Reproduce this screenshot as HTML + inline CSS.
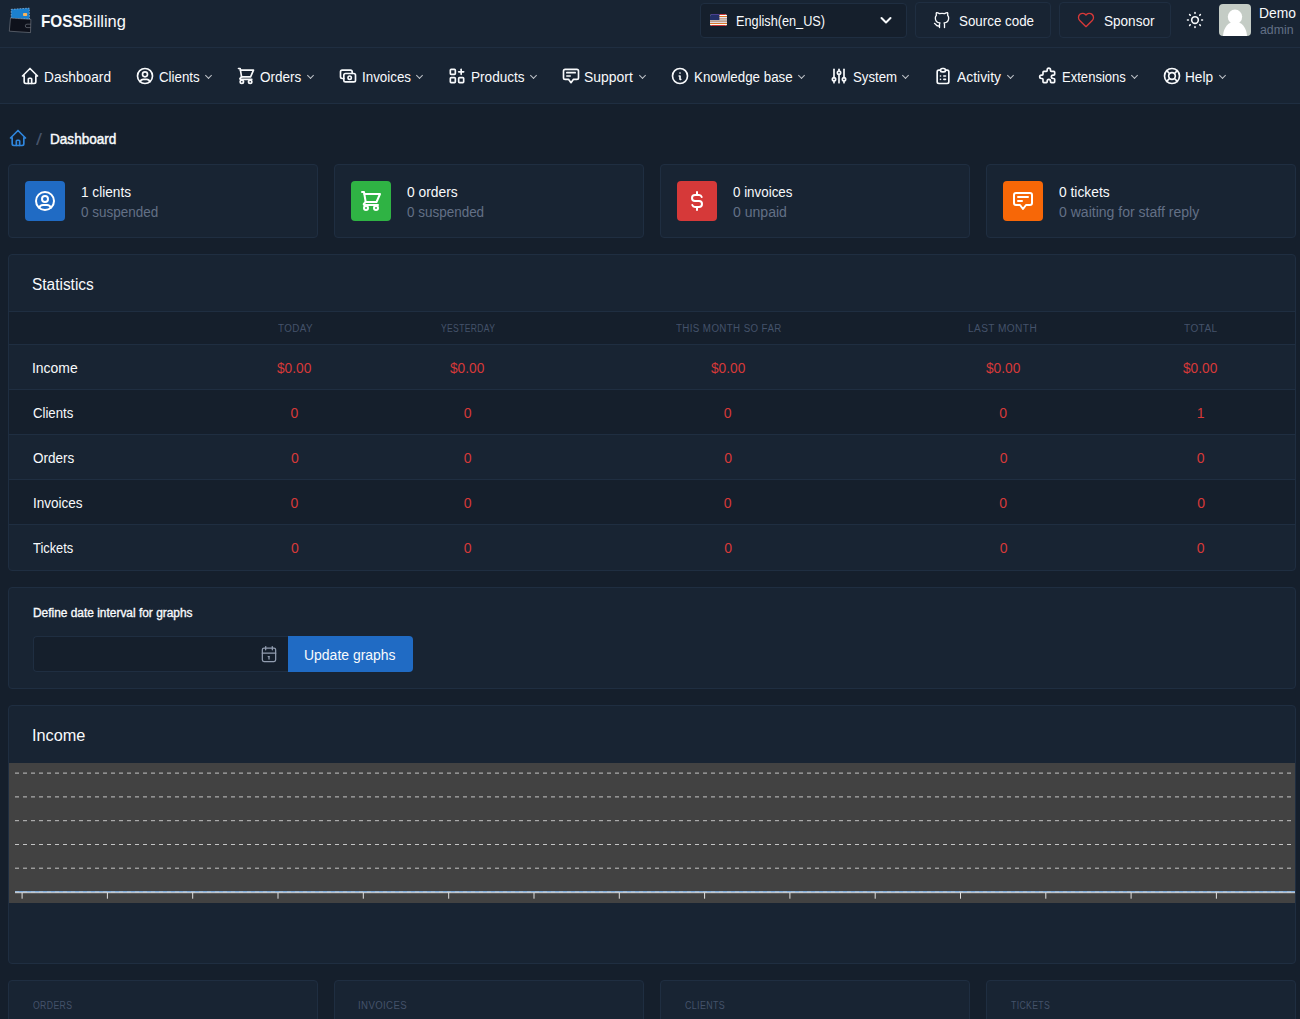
<!DOCTYPE html>
<html lang="en">
<head>
<meta charset="utf-8">
<title>Dashboard - FOSSBilling</title>
<style>
*{box-sizing:border-box;margin:0;padding:0}
html,body{width:1300px;height:1019px;overflow:hidden;background:#151f2c}
body{position:relative;font-family:"Liberation Sans",Arial,sans-serif;font-size:14px;color:#f8fafc;line-height:20px}
.abs{position:absolute}
svg.ic{position:absolute;width:20px;height:20px;fill:none;stroke:currentColor;stroke-width:2;stroke-linecap:round;stroke-linejoin:round}
.t{position:absolute;white-space:nowrap;line-height:20px;transform-origin:0 50%}
#hdr{position:absolute;left:0;top:0;width:1300px;height:48px;background:#182433;border-bottom:1px solid #1f2e41}
#nav{position:absolute;left:0;top:48px;width:1300px;height:56px;background:#182433;border-bottom:1px solid #1f2e41}
.btn{position:absolute;top:2px;height:36px;border:1px solid #1f2e41;border-radius:4px;background:#182433}
.muted{color:#637086}
.card{position:absolute;background:#182433;border:1px solid #1f2e41;border-radius:4px}
.av{position:absolute;left:16px;top:16px;width:40px;height:40px;border-radius:4px;color:#fff}
.av svg.ic{left:8px;top:8px;width:24px;height:24px;stroke-width:2}
.chev{position:absolute;width:5px;height:5px;border-right:1.5px solid #f8fafc;border-bottom:1.5px solid #f8fafc;transform:rotate(45deg);opacity:.75}
.up{font-size:10px;letter-spacing:.4px;color:#44526a;text-transform:uppercase}
.row{position:absolute;left:0;width:1286px;height:45px;border-top:1px solid #1f2e41}
.row.d{background:#151f2c}
.red{color:#d63939}
</style>
</head>
<body>

<div id="hdr">
  <svg class="abs" style="left:8px;top:7px" width="25" height="27" viewBox="0 0 25 27">
    <path d="M3.2 2.3 L21.3 1.1 L21.5 12.2 L3.2 11.4 Z" fill="#1b80ce" stroke="#a9c6e8" stroke-width=".6" stroke-dasharray="1.6 1.2"/>
    <rect x="15" y="6" width="4.200" height="3" rx=".9" fill="#f8b45e"/>
    <path d="M2.5 11 L22.900 12.4 L22.500 25.600 L1.300 24.200 Z" fill="#0e111b" stroke="#868c94" stroke-width=".55" stroke-linejoin="round"/>
    <path d="M22.700 17.200 h-3.700 a1.700 1.700 0 0 0 0 3.400 h3.600" fill="none" stroke="#868c94" stroke-width=".55"/>
  </svg>
  <div class="t" id="brandF" style="left:41.20px;top:12px;transform:scaleX(0.9000);font-size:17px;font-weight:bold">FOSS</div>
  <div class="t" id="brandB" style="left:81.80px;top:12px;transform:scaleX(0.9680);font-size:17px">Billing</div>
  <div class="abs" style="left:700px;top:3px;width:207px;height:35px;border:1px solid #1f2e41;border-radius:4px;background:#151f2c"></div>
  <svg class="abs" style="left:710px;top:14px;border-radius:2.5px;overflow:hidden" width="17.2" height="12" viewBox="0 0 17.2 12">
    <g><rect width="17.200" height="12" fill="#fff"/><rect x="9" y="0" width="8.200" height="1.050" fill="#cf3a3a"/><rect x="9" y="1" width="8.200" height="1.050" fill="#ffffff"/><rect x="9" y="2" width="8.200" height="1.050" fill="#e07a22"/><rect x="9" y="3" width="8.200" height="1.050" fill="#e8e2ee"/><rect x="9" y="4" width="8.200" height="1.050" fill="#c4a494"/><rect x="9" y="5" width="8.200" height="1.050" fill="#c9bdb9"/><rect x="0" y="6" width="17.200" height="1.050" fill="#c2b2aa"/><rect x="0" y="7" width="17.200" height="1.050" fill="#c29e8a"/><rect x="0" y="8" width="17.200" height="1.050" fill="#dfd9e2"/><rect x="0" y="9" width="17.200" height="1.050" fill="#da7a2a"/><rect x="0" y="10" width="17.200" height="1.050" fill="#fffff2"/><rect x="0" y="11" width="17.200" height="1.050" fill="#c93438"/><rect width="9.400" height="6" fill="#232f66"/><rect width="9.400" height="1" fill="#4b3f8f"/></g>
  </svg>
  <div class="t" id="langt" style="left:736.00px;top:11px;transform:scaleX(0.9083);">English(en_US)</div>
  <svg class="abs" style="left:878px;top:12px;fill:none;stroke:#f8fafc;stroke-width:2;stroke-linecap:round;stroke-linejoin:round" width="16" height="16" viewBox="0 0 16 16"><path d="M3.5 6l4.500 4.500l4.500 -4.500"/></svg>
  <div class="btn" style="left:915px;width:136px"></div>
  <svg class="ic" style="left:932px;top:10px;stroke-width:1.6" viewBox="0 0 24 24"><path d="M9 19c-4.300 1.400 -4.300 -2.500 -6 -3m12 5v-3.500c0 -1 .100 -1.400 -.500 -2c2.800 -.300 5.500 -1.400 5.500 -6a4.600 4.600 0 0 0 -1.300 -3.200a4.200 4.200 0 0 0 -.100 -3.200s-1.100 -.300 -3.500 1.300a12.300 12.300 0 0 0 -6.200 0c-2.400 -1.600 -3.500 -1.300 -3.500 -1.300a4.200 4.200 0 0 0 -.100 3.200a4.600 4.600 0 0 0 -1.300 3.200c0 4.600 2.700 5.700 5.500 6c-.600 .600 -.600 1.200 -.500 2v3.500"/></svg>
  <div class="t" id="srct" style="left:959.00px;top:11px;transform:scaleX(0.9540);">Source code</div>
  <div class="btn" style="left:1059px;width:112px"></div>
  <svg class="ic" style="left:1076px;top:10px;stroke:#d63939;stroke-width:1.6" viewBox="0 0 24 24"><path d="M19.500 12.572l-7.500 7.428l-7.500 -7.428a5 5 0 1 1 7.500 -6.566a5 5 0 1 1 7.500 6.572"/></svg>
  <div class="t" id="spot" style="left:1104.00px;top:11px;transform:scaleX(0.9676);">Sponsor</div>
  <svg class="ic" style="left:1185px;top:10px;stroke-width:1.9" viewBox="0 0 24 24"><path d="M12 12m-4 0a4 4 0 1 0 8 0a4 4 0 1 0 -8 0"/><path d="M3 12h1m8 -9v1m8 8h1m-9 8v1m-6.400 -15.400l.7 .7m12.100 -.7l-.7 .7m0 11.400l.7 .7m-12.100 -.7l-.7 .7"/></svg>
  <svg class="abs" style="left:1219px;top:4px;border-radius:4px" width="32" height="32" viewBox="0 0 32 32">
    <rect width="32" height="32" fill="#c4ccc5"/>
    <circle cx="16" cy="12.8" r="7.2" fill="#fff"/>
    <path d="M4 32 C4.5 24 9 17.500 16 17.500 C23 17.500 27.500 24 28 32 Z" fill="#fff"/>
  </svg>
  <div class="t" id="demot" style="left:1259.00px;top:3px;transform:scaleX(0.9883);">Demo</div>
  <div class="t muted" id="admt" style="left:1260.00px;top:20px;transform:scaleX(1.0248);font-size:12px">admin</div>
</div>
<div id="nav">
  <svg class="ic" style="left:20px;top:18px;" viewBox="0 0 24 24"><path d="M5 12l-2 0l9 -9l9 9l-2 0"/><path d="M5 12v7a2 2 0 0 0 2 2h10a2 2 0 0 0 2 -2v-7"/><path d="M10 21v-5.300a1 1 0 0 1 1 -1h2a1 1 0 0 1 1 1v5.300"/></svg>
  <div class="t" id="n0" style="left:44.00px;top:19px;transform:scaleX(0.9789);">Dashboard</div>
  <svg class="ic" style="left:135px;top:18px;" viewBox="0 0 24 24"><path d="M12 12m-9 0a9 9 0 1 0 18 0a9 9 0 1 0 -18 0"/><path d="M12 10m-3 0a3 3 0 1 0 6 0a3 3 0 1 0 -6 0"/><path d="M6.168 18.849a4 4 0 0 1 3.832 -2.849h4a4 4 0 0 1 3.834 2.855"/></svg>
  <div class="t" id="n1" style="left:159.00px;top:19px;transform:scaleX(0.9514);">Clients</div>
  <div class="chev" style="left:205.5px;top:25px"></div>
  <svg class="ic" style="left:236px;top:18px;" viewBox="0 0 24 24"><path d="M7 19m-2 0a2 2 0 1 0 4 0a2 2 0 1 0 -4 0"/><path d="M17 19m-2 0a2 2 0 1 0 4 0a2 2 0 1 0 -4 0"/><path d="M3 3h2l1.700 10"/><path d="M5.400 5h15.600l-3.500 8h-10.800"/><path d="M6.700 13l-1.800 1.700a.8 .8 0 0 0 .6 1.300h13.500"/></svg>
  <div class="t" id="n2" style="left:260.00px;top:19px;transform:scaleX(0.9665);">Orders</div>
  <div class="chev" style="left:307.5px;top:25px"></div>
  <svg class="ic" style="left:338px;top:18px;" viewBox="0 0 24 24"><path d="M7 9m0 2a2 2 0 0 1 2 -2h10a2 2 0 0 1 2 2v6a2 2 0 0 1 -2 2h-10a2 2 0 0 1 -2 -2z"/><path d="M14 14m-2 0a2 2 0 1 0 4 0a2 2 0 1 0 -4 0"/><path d="M17 9v-2a2 2 0 0 0 -2 -2h-10a2 2 0 0 0 -2 2v6a2 2 0 0 0 2 2h2"/></svg>
  <div class="t" id="n3" style="left:362.00px;top:19px;transform:scaleX(0.9550);">Invoices</div>
  <div class="chev" style="left:416.9px;top:25px"></div>
  <svg class="ic" style="left:447px;top:18px;" viewBox="0 0 24 24"><path d="M4 4m0 1a1 1 0 0 1 1 -1h4a1 1 0 0 1 1 1v4a1 1 0 0 1 -1 1h-4a1 1 0 0 1 -1 -1z"/><path d="M4 14m0 1a1 1 0 0 1 1 -1h4a1 1 0 0 1 1 1v4a1 1 0 0 1 -1 1h-4a1 1 0 0 1 -1 -1z"/><path d="M14 14m0 1a1 1 0 0 1 1 -1h4a1 1 0 0 1 1 1v4a1 1 0 0 1 -1 1h-4a1 1 0 0 1 -1 -1z"/><path d="M14 7l6 0"/><path d="M17 4l0 6"/></svg>
  <div class="t" id="n4" style="left:471.00px;top:19px;transform:scaleX(0.9707);">Products</div>
  <div class="chev" style="left:530.5px;top:25px"></div>
  <svg class="ic" style="left:561px;top:18px;" viewBox="0 0 24 24"><path d="M7 8h10"/><path d="M7 12h4"/><path d="M9 16h-4a2 2 0 0 1 -2 -2v-8a2 2 0 0 1 2 -2h14a2 2 0 0 1 2 2v8a2 2 0 0 1 -2 2h-4l-3 4z"/></svg>
  <div class="t" id="n5" style="left:584.30px;top:19px;transform:scaleX(0.9943);">Support</div>
  <div class="chev" style="left:640.0px;top:25px"></div>
  <svg class="ic" style="left:670px;top:18px;" viewBox="0 0 24 24"><path d="M3 12a9 9 0 1 0 18 0a9 9 0 0 0 -18 0"/><path d="M12 8.500h.01"/><path d="M11 12h1v4h1"/></svg>
  <div class="t" id="n6" style="left:694.00px;top:19px;transform:scaleX(0.9532);">Knowledge base</div>
  <div class="chev" style="left:798.5px;top:25px"></div>
  <svg class="ic" style="left:829px;top:18px;" viewBox="0 0 24 24"><path d="M4 16a2 2 0 1 0 4 0a2 2 0 0 0 -4 0"/><path d="M6 4v10"/><path d="M6 18v2"/><path d="M10 8a2 2 0 1 0 4 0a2 2 0 0 0 -4 0"/><path d="M12 4v2"/><path d="M12 10v10"/><path d="M16 16a2 2 0 1 0 4 0a2 2 0 0 0 -4 0"/><path d="M18 4v10"/><path d="M18 18v2"/></svg>
  <div class="t" id="n7" style="left:853.00px;top:19px;transform:scaleX(0.9447);">System</div>
  <div class="chev" style="left:902.5px;top:25px"></div>
  <svg class="ic" style="left:933px;top:18px;" viewBox="0 0 24 24"><path d="M9 5h-2a2 2 0 0 0 -2 2v12a2 2 0 0 0 2 2h10a2 2 0 0 0 2 -2v-12a2 2 0 0 0 -2 -2h-2"/><path d="M9 3m0 2a2 2 0 0 1 2 -2h2a2 2 0 0 1 2 2v0a2 2 0 0 1 -2 2h-2a2 2 0 0 1 -2 -2z"/><path d="M9 12l.01 0"/><path d="M13 12l2 0"/><path d="M9 16l.01 0"/><path d="M13 16l2 0"/></svg>
  <div class="t" id="n8" style="left:957.00px;top:19px;transform:scaleX(0.9911);">Activity</div>
  <div class="chev" style="left:1008.1px;top:25px"></div>
  <svg class="ic" style="left:1038px;top:18px;" viewBox="0 0 24 24"><path d="M7 6.5h3a1 1 0 0 0 1 -1v-1a2 2 0 0 1 4 0v1a1 1 0 0 0 1 1h3a1 1 0 0 1 1 1v2.500a1 1 0 0 1 -1 1h-1a2 2 0 0 0 0 4h1a1 1 0 0 1 1 1v3a1 1 0 0 1 -1 1h-3a1 1 0 0 1 -1 -1v-1a2 2 0 0 0 -4 0v1a1 1 0 0 1 -1 1h-3a1 1 0 0 1 -1 -1v-3a1 1 0 0 0 -1 -1h-1a2 2 0 0 1 0 -4h1a1 1 0 0 0 1 -1v-2.500a1 1 0 0 1 1 -1"/></svg>
  <div class="t" id="n9" style="left:1062.00px;top:19px;transform:scaleX(0.9327);">Extensions</div>
  <div class="chev" style="left:1131.5px;top:25px"></div>
  <svg class="ic" style="left:1162px;top:18px;" viewBox="0 0 24 24"><path d="M12 12m-4 0a4 4 0 1 0 8 0a4 4 0 1 0 -8 0"/><path d="M12 12m-9 0a9 9 0 1 0 18 0a9 9 0 1 0 -18 0"/><path d="M15 15l3.350 3.350"/><path d="M9 15l-3.350 3.350"/><path d="M5.650 5.650l3.350 3.350"/><path d="M18.350 5.650l-3.350 3.350"/></svg>
  <div class="t" id="n10" style="left:1185.00px;top:19px;transform:scaleX(0.9761);">Help</div>
  <div class="chev" style="left:1219.9px;top:25px"></div>
</div>
<svg class="ic" style="left:8px;top:128px;color:#2f86dd" viewBox="0 0 24 24"><path d="M5 12l-2 0l9 -9l9 9l-2 0"/><path d="M5 12v7a2 2 0 0 0 2 2h10a2 2 0 0 0 2 -2v-7"/><path d="M10 21v-5.300a1 1 0 0 1 1 -1h2a1 1 0 0 1 1 1v5.300"/></svg>
<div class="t" id="bsep" style="left:35.60px;top:130px;font-size:16px;transform:scaleX(1.35);color:#46536a">/</div>
<div class="t" id="bcur" style="left:50.00px;top:129px;transform:scaleX(0.9693);-webkit-text-stroke:.45px #f8fafc">Dashboard</div>
<div class="card" style="left:8px;top:164px;width:310px;height:74px">
  <div class="av" style="background:#206bc4"><svg class="ic" viewBox="0 0 24 24"><path d="M12 12m-9 0a9 9 0 1 0 18 0a9 9 0 1 0 -18 0"/><path d="M12 10m-3 0a3 3 0 1 0 6 0a3 3 0 1 0 -6 0"/><path d="M6.168 18.849a4 4 0 0 1 3.832 -2.849h4a4 4 0 0 1 3.834 2.855"/></svg></div>
  <div class="t" id="s0a" style="left:72.00px;top:17px;transform:scaleX(0.9734);">1 clients</div>
  <div class="t muted" id="s0b" style="left:72.00px;top:37px;transform:scaleX(0.9631);">0 suspended</div>
</div>
<div class="card" style="left:334px;top:164px;width:310px;height:74px">
  <div class="av" style="background:#2fb344"><svg class="ic" viewBox="0 0 24 24"><path d="M7 19m-2 0a2 2 0 1 0 4 0a2 2 0 1 0 -4 0"/><path d="M17 19m-2 0a2 2 0 1 0 4 0a2 2 0 1 0 -4 0"/><path d="M3 3h2l1.700 10"/><path d="M5.400 5h15.600l-3.500 8h-10.800"/><path d="M6.700 13l-1.800 1.700a.8 .8 0 0 0 .6 1.300h13.500"/></svg></div>
  <div class="t" id="s1a" style="left:72.00px;top:17px;transform:scaleX(0.9875);">0 orders</div>
  <div class="t muted" id="s1b" style="left:72.00px;top:37px;transform:scaleX(0.9616);">0 suspended</div>
</div>
<div class="card" style="left:660px;top:164px;width:310px;height:74px">
  <div class="av" style="background:#d63939"><svg class="ic" viewBox="0 0 24 24"><path d="M16.700 8a3 3 0 0 0 -2.700 -2h-4a3 3 0 0 0 0 6h4a3 3 0 0 1 0 6h-4a3 3 0 0 1 -2.700 -2"/><path d="M12 3v3m0 12v3"/></svg></div>
  <div class="t" id="s2a" style="left:72.00px;top:17px;transform:scaleX(0.9545);">0 invoices</div>
  <div class="t muted" id="s2b" style="left:72.00px;top:37px;transform:scaleX(1.0036);">0 unpaid</div>
</div>
<div class="card" style="left:986px;top:164px;width:310px;height:74px">
  <div class="av" style="background:#f76707"><svg class="ic" viewBox="0 0 24 24"><path d="M7 8h10"/><path d="M7 12h4"/><path d="M9 16h-4a2 2 0 0 1 -2 -2v-8a2 2 0 0 1 2 -2h14a2 2 0 0 1 2 2v8a2 2 0 0 1 -2 2h-4l-3 4z"/></svg></div>
  <div class="t" id="s3a" style="left:72.00px;top:17px;transform:scaleX(0.9857);">0 tickets</div>
  <div class="t muted" id="s3b" style="left:72.00px;top:37px;transform:scaleX(1.0025);">0 waiting for staff reply</div>
</div>
<div class="card" id="stat" style="left:8px;top:254px;width:1288px;height:317px;overflow:hidden">
  <div class="t" id="stt" style="left:23.00px;top:18px;transform:scaleX(0.9648);font-size:16px;line-height:24px">Statistics</div>
  <div class="abs" style="left:0;top:56px;width:1286px;height:33px;background:#151f2c;border-top:1px solid #1f2e41">
    <div class="t up" id="th0" style="left:268.90px;top:7px;transform:scaleX(0.9833);">Today</div>
    <div class="t up" id="th1" style="left:431.70px;top:7px;transform:scaleX(0.8562);">Yesterday</div>
    <div class="t up" id="th2" style="left:666.50px;top:7px;transform:scaleX(0.9749);">This month so far</div>
    <div class="t up" id="th3" style="left:958.90px;top:7px;transform:scaleX(1.0128);">Last month</div>
    <div class="t up" id="th4" style="left:1175.20px;top:7px;transform:scaleX(1.0080);">Total</div>
  </div>
  <div class="row" style="top:89px">
    <div class="t" id="r0l" style="left:23.00px;top:13px;transform:scaleX(0.9954);">Income</div>
    <div class="t red" id="v00" style="left:268.40px;top:13px;transform:scaleX(0.9793);">$0.00</div>
    <div class="t red" id="v01" style="left:441.20px;top:13px;transform:scaleX(0.9793);">$0.00</div>
    <div class="t red" id="v02" style="left:701.50px;top:13px;transform:scaleX(0.9793);">$0.00</div>
    <div class="t red" id="v03" style="left:976.90px;top:13px;transform:scaleX(0.9793);">$0.00</div>
    <div class="t red" id="v04" style="left:1174.20px;top:13px;transform:scaleX(0.9793);">$0.00</div>
  </div>
  <div class="row d" style="top:134px">
    <div class="t" id="r1l" style="left:24.00px;top:13px;transform:scaleX(0.9409);">Clients</div>
    <div class="t red" id="v10" style="left:281.60px;top:13px;">0</div>
    <div class="t red" id="v11" style="left:454.80px;top:13px;">0</div>
    <div class="t red" id="v12" style="left:714.80px;top:13px;">0</div>
    <div class="t red" id="v13" style="left:990.20px;top:13px;">0</div>
    <div class="t red" id="v14" style="left:1187.70px;top:13px;">1</div>
  </div>
  <div class="row" style="top:179px">
    <div class="t" id="r2l" style="left:24.00px;top:13px;transform:scaleX(0.9641);">Orders</div>
    <div class="t red" id="v20" style="left:282.10px;top:13px;">0</div>
    <div class="t red" id="v21" style="left:454.80px;top:13px;">0</div>
    <div class="t red" id="v22" style="left:715.30px;top:13px;">0</div>
    <div class="t red" id="v23" style="left:990.70px;top:13px;">0</div>
    <div class="t red" id="v24" style="left:1187.70px;top:13px;">0</div>
  </div>
  <div class="row d" style="top:224px">
    <div class="t" id="r3l" style="left:24.00px;top:13px;transform:scaleX(0.9652);">Invoices</div>
    <div class="t red" id="v30" style="left:281.60px;top:13px;">0</div>
    <div class="t red" id="v31" style="left:454.80px;top:13px;">0</div>
    <div class="t red" id="v32" style="left:714.80px;top:13px;">0</div>
    <div class="t red" id="v33" style="left:990.20px;top:13px;">0</div>
    <div class="t red" id="v34" style="left:1188.20px;top:13px;">0</div>
  </div>
  <div class="row" style="top:269px">
    <div class="t" id="r4l" style="left:24.00px;top:13px;transform:scaleX(0.9195);">Tickets</div>
    <div class="t red" id="v40" style="left:282.10px;top:13px;">0</div>
    <div class="t red" id="v41" style="left:454.80px;top:13px;">0</div>
    <div class="t red" id="v42" style="left:715.30px;top:13px;">0</div>
    <div class="t red" id="v43" style="left:990.70px;top:13px;">0</div>
    <div class="t red" id="v44" style="left:1187.70px;top:13px;">0</div>
  </div>
</div>
<div class="card" style="left:8px;top:587px;width:1288px;height:102px">
  <div class="t" id="dlab" style="left:24.00px;top:15px;transform:scaleX(0.9925);font-size:12px;-webkit-text-stroke:.35px #f8fafc">Define date interval for graphs</div>
  <div class="abs" style="left:24px;top:48px;width:256px;height:36px;border:1px solid #1f2e41;border-right:0;border-radius:4px 0 0 4px;background:#151f2c"></div>
  <svg class="ic" style="left:250.2px;top:56px;stroke-width:1.5;color:#929db0" viewBox="0 0 24 24"><path d="M4 7a2 2 0 0 1 2 -2h12a2 2 0 0 1 2 2v12a2 2 0 0 1 -2 2h-12a2 2 0 0 1 -2 -2v-12z"/><path d="M16 3v4"/><path d="M8 3v4"/><path d="M4 11h16"/><path d="M11 15h1"/><path d="M12 15v3"/></svg>
  <div class="abs" style="left:279px;top:48px;width:125px;height:36px;background:#206bc4;border-radius:0 4px 4px 0"></div>
  <div class="t" id="ubtn" style="left:295.00px;top:57px;transform:scaleX(0.9972);">Update graphs</div>
</div>
<div class="card" style="left:8px;top:705px;width:1288px;height:259px">
  <div class="t" id="inct" style="left:23.00px;top:18px;transform:scaleX(1.0180);font-size:16px;line-height:24px">Income</div>
  <svg class="abs" style="left:0;top:57px" width="1286" height="140" viewBox="0 0 1286 140">
    <rect width="1286" height="140" fill="#424242"/>
    <line x1="6" x2="1283" y1="10.1" y2="10.1" stroke="#c4c4c4" stroke-width="1" stroke-dasharray="4 4"/>
    <line x1="6" x2="1283" y1="33.9" y2="33.9" stroke="#c4c4c4" stroke-width="1" stroke-dasharray="4 4"/>
    <line x1="6" x2="1283" y1="57.7" y2="57.7" stroke="#c4c4c4" stroke-width="1" stroke-dasharray="4 4"/>
    <line x1="6" x2="1283" y1="81.5" y2="81.5" stroke="#c4c4c4" stroke-width="1" stroke-dasharray="4 4"/>
    <line x1="6" x2="1283" y1="105.2" y2="105.2" stroke="#c4c4c4" stroke-width="1" stroke-dasharray="4 4"/>
    <line x1="6" x2="1286" y1="129.700" y2="129.700" stroke="#e0e0e0" stroke-width="1"/>
    <line x1="6" x2="1286" y1="128.700" y2="128.700" stroke="#8ec5ff" stroke-width="1"/>
    <line x1="6" x2="1283" y1="129.050" y2="129.050" stroke="#d4d4d4" stroke-width="1" stroke-dasharray="4 4" opacity=".7"/>
    <line x1="13.1" x2="13.1" y1="129.500" y2="135.700" stroke="#e0e0e0" stroke-width="1"/>
    <line x1="98.4" x2="98.4" y1="129.500" y2="135.700" stroke="#e0e0e0" stroke-width="1"/>
    <line x1="183.7" x2="183.7" y1="129.500" y2="135.700" stroke="#e0e0e0" stroke-width="1"/>
    <line x1="269.0" x2="269.0" y1="129.500" y2="135.700" stroke="#e0e0e0" stroke-width="1"/>
    <line x1="354.3" x2="354.3" y1="129.500" y2="135.700" stroke="#e0e0e0" stroke-width="1"/>
    <line x1="439.7" x2="439.7" y1="129.500" y2="135.700" stroke="#e0e0e0" stroke-width="1"/>
    <line x1="525.0" x2="525.0" y1="129.500" y2="135.700" stroke="#e0e0e0" stroke-width="1"/>
    <line x1="610.3" x2="610.3" y1="129.500" y2="135.700" stroke="#e0e0e0" stroke-width="1"/>
    <line x1="695.6" x2="695.6" y1="129.500" y2="135.700" stroke="#e0e0e0" stroke-width="1"/>
    <line x1="780.9" x2="780.9" y1="129.500" y2="135.700" stroke="#e0e0e0" stroke-width="1"/>
    <line x1="866.2" x2="866.2" y1="129.500" y2="135.700" stroke="#e0e0e0" stroke-width="1"/>
    <line x1="951.5" x2="951.5" y1="129.500" y2="135.700" stroke="#e0e0e0" stroke-width="1"/>
    <line x1="1036.8" x2="1036.8" y1="129.500" y2="135.700" stroke="#e0e0e0" stroke-width="1"/>
    <line x1="1122.1" x2="1122.1" y1="129.500" y2="135.700" stroke="#e0e0e0" stroke-width="1"/>
    <line x1="1207.4" x2="1207.4" y1="129.500" y2="135.700" stroke="#e0e0e0" stroke-width="1"/>
  </svg>
</div>
<div class="card" style="left:8px;top:980px;width:310px;height:120px"><div class="t up" id="b0" style="left:24.00px;top:15px;transform:scaleX(0.8702);">Orders</div></div>
<div class="card" style="left:334px;top:980px;width:310px;height:120px"><div class="t up" id="b1" style="left:23.00px;top:15px;transform:scaleX(0.9613);">Invoices</div></div>
<div class="card" style="left:660px;top:980px;width:310px;height:120px"><div class="t up" id="b2" style="left:24.00px;top:15px;transform:scaleX(0.8911);">Clients</div></div>
<div class="card" style="left:986px;top:980px;width:310px;height:120px"><div class="t up" id="b3" style="left:24.00px;top:15px;transform:scaleX(0.8695);">Tickets</div></div>

</body>
</html>
